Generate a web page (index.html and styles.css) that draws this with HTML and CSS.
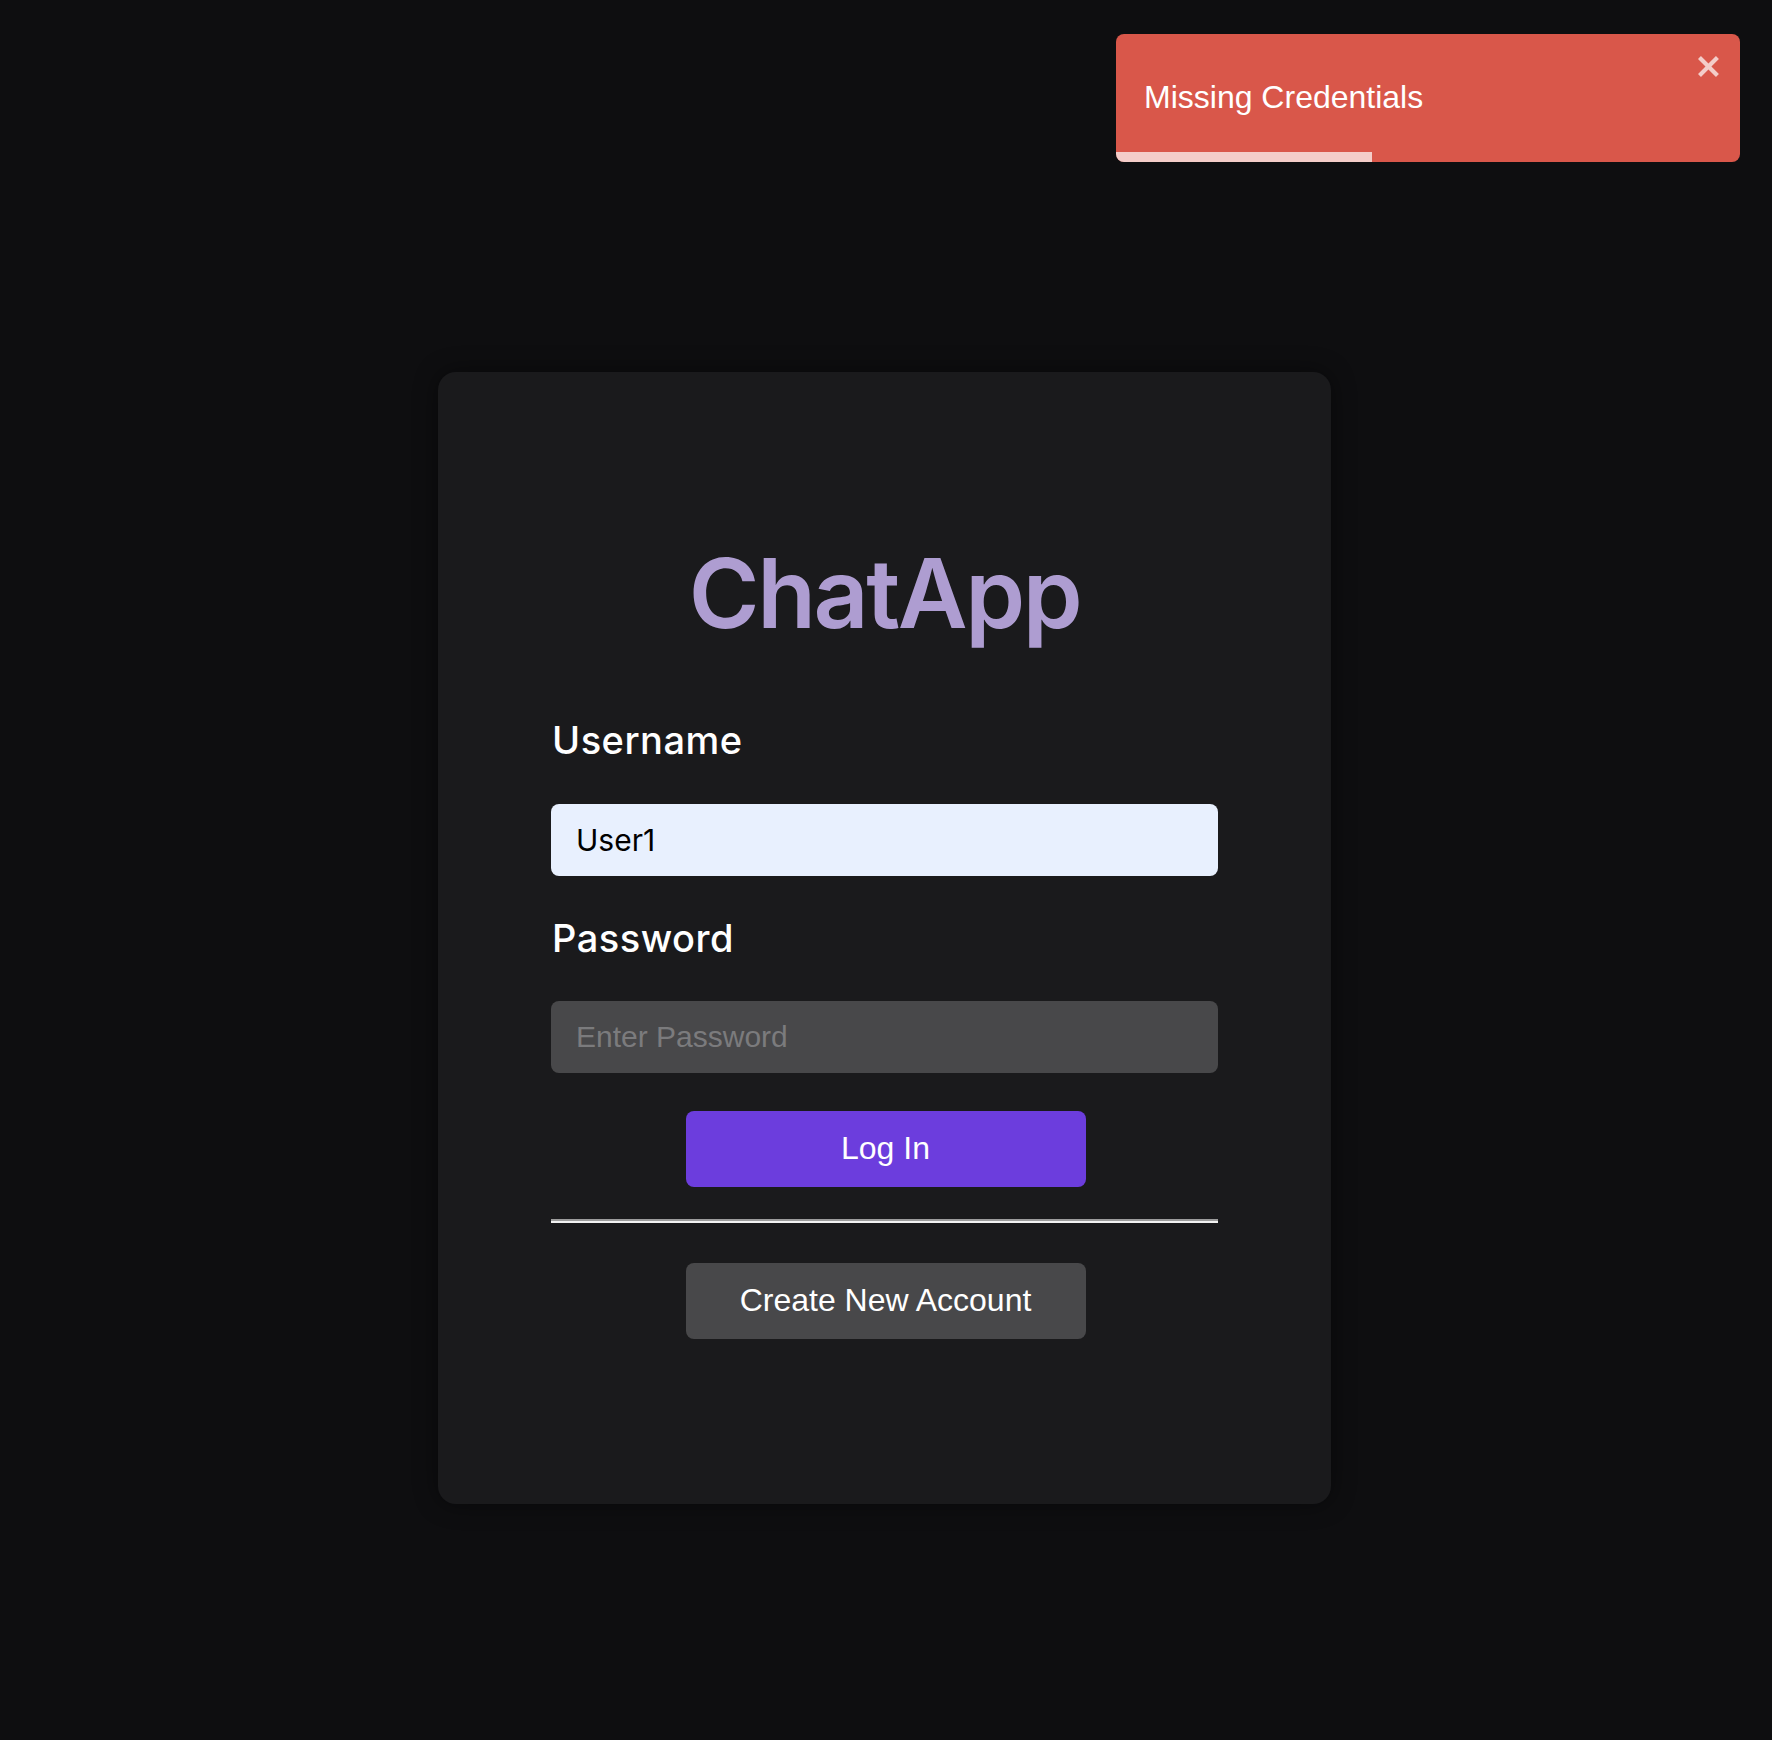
FILE: index.html
```html
<!DOCTYPE html>
<html lang="en">
<head>
<meta charset="utf-8">
<title>ChatApp</title>
<link rel="stylesheet" href="styles.css">
</head>
<body>
<div class="page">
  <form class="card">
    <h1 class="title">ChatApp</h1>
    <label class="label" for="username">Username</label>
    <input class="field field-filled" id="username" type="text" value="User1">
    <label class="label" for="password">Password</label>
    <input class="field field-empty" id="password" type="password" placeholder="Enter Password">
    <button class="btn btn-primary" type="button">Log In</button>
    <hr class="divider">
    <button class="btn btn-secondary" type="button">Create New Account</button>
  </form>
</div>
<div class="toast" role="alert">
  <div class="toast-body">Missing Credentials</div>
  <button class="toast-close" type="button" aria-label="close">
    <svg viewBox="0 0 14 16" width="28" height="32" aria-hidden="true"><path fill-rule="evenodd" fill="currentColor" d="M7.71 8.23l3.75 3.75-1.48 1.48-3.75-3.75-3.75 3.75L1 11.98l3.75-3.75L1 4.48 2.48 3l3.75 3.75L9.98 3l1.48 1.48-3.75 3.75z"/></svg>
  </button>
  <div class="toast-progress"></div>
</div>
</body>
</html>
```
FILE: styles.css
```css
* { box-sizing: border-box; }
html, body {
  margin: 0;
  padding: 0;
  background: #0e0e10;
  height: 100%;
}
body {
  font-family: "Liberation Sans", Arial, sans-serif;
  overflow: hidden;
}
.page {
  display: flex;
  justify-content: center;
  padding-top: 372px;
  padding-right: 3px;
}
.card {
  width: 893px;
  height: 1132px;
  background: #1a1a1c;
  border-radius: 18px;
  box-shadow: 0 0 24px rgba(0, 0, 0, 0.45);
  padding: 173px 113px 0;
  display: flex;
  flex-direction: column;
}
.title {
  margin: 0;
  font-family: Inter, "Noto Sans", sans-serif;
  font-weight: 600;
  font-size: 96px;
  line-height: 96px;
  color: #ae9dd1;
  text-align: center;
  letter-spacing: -2.4px;
}
.label {
  display: block;
  font-family: Inter, "Noto Sans", sans-serif;
  font-weight: 500;
  font-size: 38px;
  line-height: 37.4px;
  color: #ffffff;
  margin-top: 81px;
  margin-bottom: 45px;
  padding-left: 1px;
  letter-spacing: 0.5px;
}
.field + .label { margin-top: 44px; margin-bottom: 43px; }
.field {
  display: block;
  width: 100%;
  height: 72px;
  border: none;
  border-radius: 8px;
  padding: 0 25px;
  font-size: 30px;
  outline: none;
}
.field-filled {
  background: #e8f0fe;
  color: #000;
  font-family: Inter, "Noto Sans", sans-serif;
}
.field-empty {
  background: #48484a;
  color: #fff;
  font-family: "Liberation Sans", Arial, sans-serif;
}
.field-empty::placeholder { color: #7b7b7d; }
.btn {
  display: block;
  align-self: center;
  width: 400px;
  height: 76px;
  border: none;
  border-radius: 8px;
  font-family: "Liberation Sans", Arial, sans-serif;
  font-size: 32px;
  color: #fff;
  cursor: pointer;
  margin-left: 2px;
}
.btn-primary { background: #6c3ddd; margin-top: 38px; }
.btn-secondary { background: #48484a; }
.divider {
  width: 100%;
  margin: 32px 0 40px;
  border: none;
  border-top: 2px solid #9c9c9c;
  border-bottom: 2px solid #f2f2f2;
  height: 0;
}
.toast {
  position: absolute;
  top: 34px;
  left: 1116px;
  width: 624px;
  height: 128px;
  background: #d9574a;
  border-radius: 8px;
  overflow: hidden;
  display: flex;
  align-items: center;
  padding: 0 28px;
}
.toast-body {
  color: #fff;
  font-size: 32px;
  margin-top: -2px;
}
.toast-close {
  position: absolute;
  top: 16px;
  right: 16px;
  padding: 0;
  border: none;
  background: none;
  color: #fff;
  opacity: 0.7;
  width: 28px;
  height: 32px;
  display: block;
}
.toast-close svg { display: block; }
.toast-progress {
  position: absolute;
  left: 0;
  bottom: 0;
  width: 256px;
  height: 10px;
  background: rgba(255, 255, 255, 0.7);
}
```
